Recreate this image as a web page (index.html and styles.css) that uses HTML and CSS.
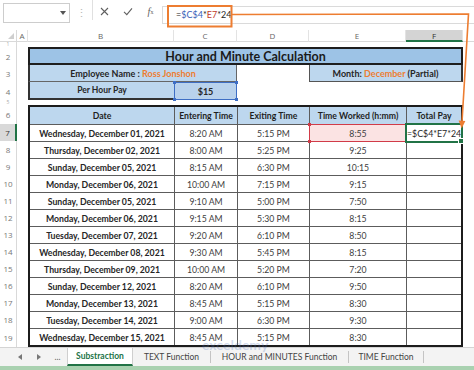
FILE: index.html
```html
<!DOCTYPE html>
<html lang="en">
<head>
  <meta charset="UTF-8" />
  <meta name="viewport" content="width=device-width, initial-scale=1.0" />
  <title>Hour and Minute Calculation</title>
  <link rel="stylesheet" href="styles.css">
</head>
<body>
<div class="app">

  <div class="formula-bar">
    <div class="name-box"><span class="caret"></span></div>
    <div class="grip">⋮</div>
    <div class="fx-group">
      <span class="fx-btn"><svg width="9" height="9" viewBox="0 0 9 9"><path d="M1 1L8 8M8 1L1 8" stroke="#5f5f5f" stroke-width="1.1"/></svg></span>
      <span class="fx-btn"><svg width="10" height="9" viewBox="0 0 10 9"><path d="M1 4.8L3.8 7.6L9 1.4" fill="none" stroke="#5f5f5f" stroke-width="1.1"/></svg></span>
      <span class="fx-btn fx"><i>f</i><sub>x</sub></span>
    </div>
    <div class="formula-input"><span>=</span><span class="ref-blue">$C$4</span>*<span class="ref-red">E7</span>*24</div>
  </div>

  <div class="sheet">
    <div class="corner"><span class="tri"></span></div>
    <div class="col-head">A</div>
    <div class="col-head">B</div>
    <div class="col-head">C</div>
    <div class="col-head">D</div>
    <div class="col-head">E</div>
    <div class="col-head selected">F</div>
    <div class="col-head rest"></div>

    <div class="row-head thin">1</div>

    <div class="row-head">2</div>
    <div></div>
    <div class="title">Hour and Minute Calculation</div>

    <div class="row-head">3</div>
    <div></div>
    <div class="info employee"><span>Employee Name : <span class="orange">Ross Jonshon</span></span></div>
    <div></div>
    <div class="info month"><span>Month: <span class="orange">December</span> (Partial)</span></div>

    <div class="row-head">4</div>
    <div></div>
    <div class="info pay-label">Per Hour Pay</div>
    <div class="info pay-value">$15</div>

    <div class="row-head thin">5</div>
    <div class="row-head">6</div>
    <div class="row-head active">7</div>
    <div class="row-head">8</div>
    <div class="row-head">9</div>
    <div class="row-head">10</div>
    <div class="row-head">11</div>
    <div class="row-head">12</div>
    <div class="row-head">13</div>
    <div class="row-head">14</div>
    <div class="row-head">15</div>
    <div class="row-head">16</div>
    <div class="row-head">17</div>
    <div class="row-head">18</div>
    <div class="row-head">19</div>

    <div class="table">
      <div class="th">Date</div><div class="th">Entering Time</div><div class="th">Exiting Time</div><div class="th">Time Worked (h:mm)</div><div class="th">Total Pay</div>

      <div class="date">Wednesday, December 01, 2021</div><div>8:20 AM</div><div>5:15 PM</div><div class="prec-red">8:55</div><div class="active-cell">=$C$4*E7*24</div>
      <div class="date">Thursday, December 02, 2021</div><div>8:00 AM</div><div>5:25 PM</div><div>9:25</div><div></div>
      <div class="date">Sunday, December 05, 2021</div><div>8:15 AM</div><div>6:30 PM</div><div>10:15</div><div></div>
      <div class="date">Monday, December 06, 2021</div><div>10:00 AM</div><div>7:15 PM</div><div>9:15</div><div></div>
      <div class="date">Sunday, December 05, 2021</div><div>9:10 AM</div><div>5:00 PM</div><div>7:50</div><div></div>
      <div class="date">Monday, December 06, 2021</div><div>9:15 AM</div><div>5:30 PM</div><div>8:15</div><div></div>
      <div class="date">Tuesday, December 07, 2021</div><div>9:20 AM</div><div>6:10 PM</div><div>8:50</div><div></div>
      <div class="date">Wednesday, December 08, 2021</div><div>9:30 AM</div><div>5:45 PM</div><div>8:15</div><div></div>
      <div class="date">Thursday, December 09, 2021</div><div>10:00 AM</div><div>5:20 PM</div><div>7:20</div><div></div>
      <div class="date">Sunday, December 12, 2021</div><div>8:20 AM</div><div>6:10 PM</div><div>9:50</div><div></div>
      <div class="date">Monday, December 13, 2021</div><div>8:45 AM</div><div>5:15 PM</div><div>8:30</div><div></div>
      <div class="date">Tuesday, December 14, 2021</div><div>9:00 AM</div><div>6:30 PM</div><div>9:30</div><div></div>
      <div class="date">Wednesday, December 15, 2021</div><div>8:45 AM</div><div>5:15 PM</div><div>8:30</div><div></div>
    </div>
  </div>

  <div class="tabs">
    <span class="nav"><svg width="4" height="6" viewBox="0 0 4 6"><path d="M4 0L0 3L4 6Z" fill="#777"/></svg></span>
    <span class="nav"><svg width="4" height="6" viewBox="0 0 4 6"><path d="M0 0L4 3L0 6Z" fill="#777"/></svg></span>
    <span class="nav">...</span>
    <span class="tab current">Substraction</span>
    <span class="tab t-text">TEXT Function</span>
    <span class="tab t-hour">HOUR and MINUTES Function</span>
    <span class="tab t-time">TIME Function</span>
  </div>
  <div class="status"></div>

  <div class="watermark">exceldemy</div>

  <svg class="annot" width="474" height="370" viewBox="0 0 474 370">
    <rect x="168" y="6" width="63.5" height="20.5" fill="none" stroke="#ed7d31" stroke-width="2"/>
    <polyline points="232,14.5 468.5,14 462,122" fill="none" stroke="#ed7d31" stroke-width="1.6"/>
    <path d="M458.6 120.5L465.4 121L461.6 128.5Z" fill="#ed7d31"/>
  </svg>

</div>
</body>
</html>
```

FILE: styles.css
```css
* {
  box-sizing: border-box;
}

body {
  margin: 0;
  background: #ffffff;
  font-family: Lato, 'Liberation Sans', sans-serif;
  color: #262626;
}

.app {
  position: relative;
  width: 474px;
  height: 370px;
  overflow: hidden;
}

/* formula bar */
.formula-bar {
  height: 30px;
  display: flex;
  align-items: flex-start;
  padding: 3px 0 0 3px;
}

.name-box {
  width: 67px;
  height: 20px;
  border: 1px solid #cdcdcd;
  display: flex;
  align-items: center;
  justify-content: flex-end;
  padding-right: 3px;
}

.caret {
  width: 0;
  height: 0;
  border-left: 3px solid transparent;
  border-right: 3px solid transparent;
  border-top: 4px solid #555;
}

.grip {
  width: 22px;
  height: 20px;
  line-height: 20px;
  text-align: center;
  color: #b8b8b8;
  font-size: 11px;
}

.fx-group {
  width: 70px;
  height: 20px;
  margin-top: -3px;
  padding-top: 3px;
  border-left: 1px solid #e0e0e0;
  display: flex;
  align-items: center;
}

.fx-btn {
  width: 23px;
  display: flex;
  justify-content: center;
  align-items: center;
}

.fx {
  font-family: 'Liberation Serif', serif;
  font-size: 10px;
  color: #5f5f5f;
}

.fx sub {
  font-size: 6px;
  vertical-align: -1px;
}

.formula-input {
  flex: 1;
  height: 18px;
  margin-top: 3px;
  border: 1px solid #dadada;
  border-right: none;
  padding-left: 13px;
  font-size: 9px;
  line-height: 16px;
  color: #262626;
}

.ref-blue {
  color: #3a5fb8;
}

.ref-red {
  color: #c0392b;
}

/* sheet grid */
.sheet {
  display: grid;
  grid-template-columns: 17px 11px 146px 63px 72px 97px 57px 1fr;
  grid-template-rows: 12px 5px 18px 17px 18px 5px 19px repeat(12, 17px) 19px;
}

.corner {
  display: flex;
  align-items: flex-end;
  justify-content: flex-end;
  padding: 0 2px 2px 0;
  border-right: 1px solid #d9d9d9;
  border-bottom: 1px solid #d9d9d9;
}

.tri {
  width: 0;
  height: 0;
  border-left: 6px solid transparent;
  border-bottom: 6px solid #cfcfcf;
}

.col-head {
  font-family: 'Open Sans', sans-serif;
  font-size: 8px;
  color: #666;
  text-align: center;
  line-height: 11px;
  border-right: 1px solid #e3e3e3;
  border-bottom: 1px solid #d9d9d9;
}

.col-head.rest {
  border-right: none;
}

.col-head.selected {
  background: #d4d4d4;
  color: #333;
  border-bottom: 2px solid #217346;
}

.row-head {
  grid-column: 1;
  font-family: 'Open Sans', sans-serif;
  font-size: 8px;
  color: #777;
  display: flex;
  align-items: center;
  justify-content: center;
  overflow: hidden;
  border-right: 1px solid #d9d9d9;
}

.row-head.thin {
  font-size: 5px;
  line-height: 5px;
  color: #aaa;
}

.row-head.active {
  background: #d9d9d9;
  color: #333;
  border-right: 2px solid #217346;
}

.title {
  grid-column: span 5;
  background: #9dc3e6;
  border: 2px solid #1e1e1e;
  font-weight: 700;
  font-size: 12.5px;
  color: #1a1a1a;
  display: flex;
  align-items: center;
  justify-content: center;
}

.info {
  background: #bdd7ee;
  font-weight: 700;
  font-size: 9px;
  color: #262626;
  display: flex;
  align-items: center;
  justify-content: center;
  white-space: pre;
}

.orange {
  color: #ed7d31;
}

.employee {
  grid-column: span 2;
  border-left: 2px solid #333;
  border-right: 1px solid #666;
  border-bottom: 1px solid #666;
}

.month {
  grid-column: span 2;
  border-left: 1px solid #555;
  border-right: 2px solid #333;
  border-bottom: 1px solid #555;
}

.pay-label {
  font-size: 8.5px;
  border-left: 2px solid #333;
  border-bottom: 2px solid #333;
}

.pay-value {
  position: relative;
  background: #b9d2ec;
  border: 1px solid #3e6ec4;
}

.pay-value::before {
  content: '';
  position: absolute;
  left: -2px;
  top: -2px;
  width: 3px;
  height: 3px;
  background: #3e6ec4;
  box-shadow: 62px 0 0 #3e6ec4, 0 17px 0 #3e6ec4, 62px 17px 0 #3e6ec4;
}

/* data table */
.table {
  grid-column: 3 / 8;
  grid-row: 7 / 21;
  display: grid;
  grid-template-columns: 144px 62px 71px 96px 54px;
  grid-template-rows: 17px repeat(13, 16px);
  gap: 1px;
  background: #5c5c5c;
  border: 2px solid #1c1c1c;
}

.table > div {
  background: #ffffff;
  display: flex;
  align-items: center;
  justify-content: center;
  white-space: nowrap;
  font-size: 8.7px;
  color: #404040;
}

.table > .th {
  background: #bdd7ee;
  font-weight: 700;
  color: #1f1f1f;
}

.table > .date {
  font-weight: 700;
  color: #262626;
}

.table > .prec-red {
  position: relative;
  background: #fbe3e3;
  outline: 1px solid #d13b48;
}

.prec-red::before {
  content: '';
  position: absolute;
  left: -2px;
  top: -2px;
  width: 3px;
  height: 3px;
  background: #d13b48;
  box-shadow: 97px 0 0 #d13b48, 0 17px 0 #d13b48, 97px 17px 0 #d13b48;
}

.table > .active-cell {
  position: relative;
  justify-content: flex-start;
  color: #262626;
  font-size: 8.8px;
  outline: 2px solid #217346;
  overflow: visible;
}

.active-cell::after {
  content: '';
  position: absolute;
  right: -3px;
  bottom: -3px;
  width: 4px;
  height: 4px;
  background: #217346;
  border: 1px solid #fff;
}

/* sheet tabs */
.tabs {
  height: 19px;
  display: flex;
  align-items: stretch;
  background: #f3f3f3;
  border-top: 1px solid #d4d4d4;
  padding-left: 10px;
  font-size: 8.5px;
  color: #444;
}

.nav {
  width: 19px;
  display: flex;
  align-items: center;
  justify-content: center;
  color: #666;
}

.tab {
  display: flex;
  align-items: center;
  justify-content: center;
  white-space: nowrap;
  border-right: 1px solid #c4c4c4;
  margin: 3px 0;
}

.tab.current {
  width: 66px;
  margin: 0;
  background: #ffffff;
  color: #217346;
  font-weight: 700;
  border-left: 1px solid #cfcfcf;
  border-right: 1px solid #cfcfcf;
  border-bottom: 2px solid #217346;
}

.t-text {
  width: 78px;
}

.t-hour {
  width: 138px;
}

.t-time {
  width: 75px;
}

.status {
  height: 4px;
  background: #a9d1b0;
}

/* overlays */
.watermark {
  position: absolute;
  left: 202px;
  top: 336px;
  font-size: 14px;
  font-weight: 700;
  color: rgba(80, 115, 190, 0.25);
}

.annot {
  position: absolute;
  left: 0;
  top: 0;
  pointer-events: none;
}
```
